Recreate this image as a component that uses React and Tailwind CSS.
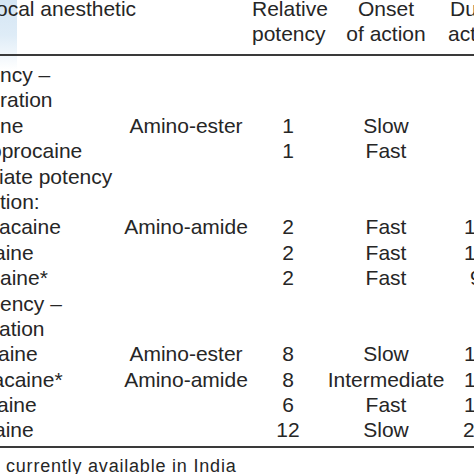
import React from "react";

const rows = [
  { c1: "ncy –", o1: "ml-0" },
  { c1: "ration", o1: "ml-0" },
  { c1: "ne", o1: "ml-0", c2: "Amino-ester", c3: "1", c4: "Slow" },
  { c1: "oprocaine", o1: "ml-[-10px]", c3: "1", c4: "Fast" },
  { c1: "iate potency", o1: "ml-[-1px]" },
  { c1: "tion:", o1: "ml-0" },
  { c1: "acaine", o1: "ml-[-1px]", c2: "Amino-amide", c3: "2", c4: "Fast", c5: "1–2", o5: "ml-[16px]" },
  { c1: "aine", o1: "ml-[-6px]", c3: "2", c4: "Fast", c5: "1–2", o5: "ml-[16px]" },
  { c1: "aine*", o1: "ml-0", c3: "2", c4: "Fast", c5: "90 min", o5: "ml-[22px]" },
  { c1: "ency –", o1: "ml-0" },
  { c1: "ation", o1: "ml-[-1px]" },
  { c1: "aine", o1: "ml-[-2px]", c2: "Amino-ester", c3: "8", c4: "Slow", c5: "1–2", o5: "ml-[16px]" },
  { c1: "acaine*", o1: "ml-[-7.5px]", c2: "Amino-amide", c3: "8", c4: "Intermediate", c5: "1–2", o5: "ml-[16px]" },
  { c1: "aine", o1: "ml-[-3px]", c3: "6", c4: "Fast", c5: "1–2", o5: "ml-[16px]" },
  { c1: "aine", o1: "ml-[-6px]", c3: "12", c4: "Slow", c5: "2–4", o5: "ml-[15px]" },
];

function Row({ r }) {
  return (
    <div className="grid grid-cols-[120px_132px_72px_124px_120px] leading-[25.4px] h-[25.4px] whitespace-nowrap">
      <div className="overflow-visible">
        <span className={`inline-block ${r.o1}`}>{r.c1}</span>
      </div>
      <div className="text-center">{r.c2 || ""}</div>
      <div className="text-center">{r.c3 || ""}</div>
      <div className="text-center">{r.c4 || ""}</div>
      <div>
        {r.c5 ? <span className={`inline-block ${r.o5}`}>{r.c5}</span> : null}
      </div>
    </div>
  );
}

export default function App() {
  return (
    <div
      className="relative w-[474px] h-[474px] overflow-hidden bg-white text-[#262626] text-[21px]"
      style={{ fontFamily: '"Liberation Sans", Arial, sans-serif' }}
    >
      <div className="absolute left-0 top-0 w-[17px] h-[70px] bg-gradient-to-b from-[#cfe2f2] via-[#dbeaf6] to-transparent opacity-90" />
      <div className="relative">
        <div className="mt-[-4px] pb-[8px] border-b-2 border-[#3a3a3a] grid grid-cols-[120px_132px_72px_124px_120px] leading-[25px] whitespace-nowrap">
          <div>
            <span className="inline-block ml-[-4px]">ocal anesthetic</span>
          </div>
          <div />
          <div className="text-center">
            <div>Relative</div>
            <div>potency</div>
          </div>
          <div className="text-center">
            <div>Onset</div>
            <div>of action</div>
          </div>
          <div>
            <div className="ml-[2px]">Duration of</div>
            <div>action</div>
          </div>
        </div>
        <div className="pt-[6px] pb-[3px] border-b-2 border-[#3a3a3a]">
          {rows.map((r, i) => (
            <Row key={i} r={r} />
          ))}
        </div>
        <div className="mt-[6px] leading-[25px] text-[18px] tracking-[0.8px] whitespace-nowrap">
          <span className="inline-block ml-[6px]">currently available in India</span>
        </div>
      </div>
    </div>
  );
}
